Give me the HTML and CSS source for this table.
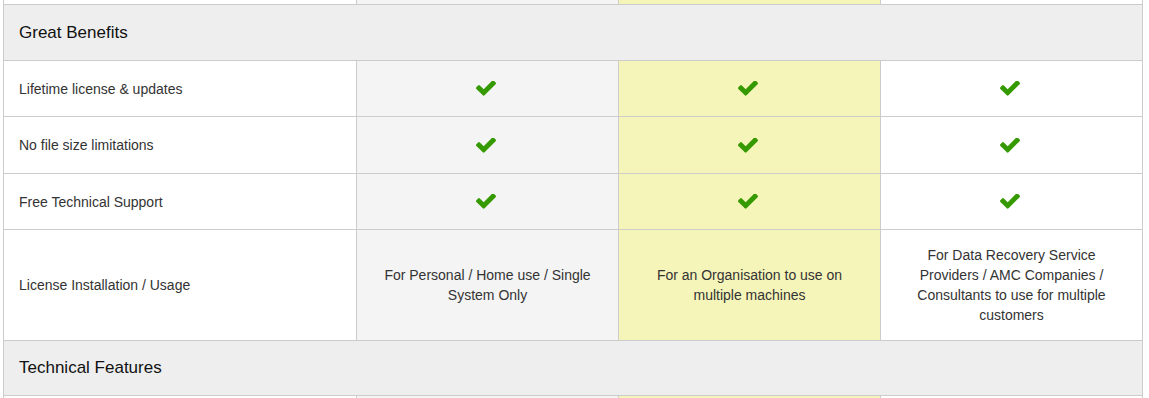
FILE: index.html
```html
<!DOCTYPE html>
<html lang="en">
<head>
<meta charset="utf-8">
<title>Compare Editions</title>
<link rel="stylesheet" href="styles.css">
</head>
<body>
<div class="compare">
  <div class="row row-edge row-top">
    <div class="cell"></div>
    <div class="cell col-personal"></div>
    <div class="cell col-business"></div>
    <div class="cell"></div>
  </div>

  <div class="row row-section">
    <div class="cell section-title">Great Benefits</div>
  </div>

  <div class="row row-feature">
    <div class="cell label">Lifetime license &amp; updates</div>
    <div class="cell col-personal value"><svg class="check" viewBox="121 410 1550 1112"><path d="M1671 566q0 40-28 68l-724 724-136 136q-28 28-68 28t-68-28l-136-136-362-362q-28-28-28-68t28-68l136-136q28-28 68-28t68 28l294 295 656-657q28-28 68-28t68 28l136 136q28 28 28 68z"/></svg></div>
    <div class="cell col-business value"><svg class="check" viewBox="121 410 1550 1112"><path d="M1671 566q0 40-28 68l-724 724-136 136q-28 28-68 28t-68-28l-136-136-362-362q-28-28-28-68t28-68l136-136q28-28 68-28t68 28l294 295 656-657q28-28 68-28t68 28l136 136q28 28 28 68z"/></svg></div>
    <div class="cell value"><svg class="check" viewBox="121 410 1550 1112"><path d="M1671 566q0 40-28 68l-724 724-136 136q-28 28-68 28t-68-28l-136-136-362-362q-28-28-28-68t28-68l136-136q28-28 68-28t68 28l294 295 656-657q28-28 68-28t68 28l136 136q28 28 28 68z"/></svg></div>
  </div>

  <div class="row row-feature row-tall">
    <div class="cell label">No file size limitations</div>
    <div class="cell col-personal value"><svg class="check" viewBox="121 410 1550 1112"><path d="M1671 566q0 40-28 68l-724 724-136 136q-28 28-68 28t-68-28l-136-136-362-362q-28-28-28-68t28-68l136-136q28-28 68-28t68 28l294 295 656-657q28-28 68-28t68 28l136 136q28 28 28 68z"/></svg></div>
    <div class="cell col-business value"><svg class="check" viewBox="121 410 1550 1112"><path d="M1671 566q0 40-28 68l-724 724-136 136q-28 28-68 28t-68-28l-136-136-362-362q-28-28-28-68t28-68l136-136q28-28 68-28t68 28l294 295 656-657q28-28 68-28t68 28l136 136q28 28 28 68z"/></svg></div>
    <div class="cell value"><svg class="check" viewBox="121 410 1550 1112"><path d="M1671 566q0 40-28 68l-724 724-136 136q-28 28-68 28t-68-28l-136-136-362-362q-28-28-28-68t28-68l136-136q28-28 68-28t68 28l294 295 656-657q28-28 68-28t68 28l136 136q28 28 28 68z"/></svg></div>
  </div>

  <div class="row row-feature">
    <div class="cell label">Free Technical Support</div>
    <div class="cell col-personal value"><svg class="check" viewBox="121 410 1550 1112"><path d="M1671 566q0 40-28 68l-724 724-136 136q-28 28-68 28t-68-28l-136-136-362-362q-28-28-28-68t28-68l136-136q28-28 68-28t68 28l294 295 656-657q28-28 68-28t68 28l136 136q28 28 28 68z"/></svg></div>
    <div class="cell col-business value"><svg class="check" viewBox="121 410 1550 1112"><path d="M1671 566q0 40-28 68l-724 724-136 136q-28 28-68 28t-68-28l-136-136-362-362q-28-28-28-68t28-68l136-136q28-28 68-28t68 28l294 295 656-657q28-28 68-28t68 28l136 136q28 28 28 68z"/></svg></div>
    <div class="cell value"><svg class="check" viewBox="121 410 1550 1112"><path d="M1671 566q0 40-28 68l-724 724-136 136q-28 28-68 28t-68-28l-136-136-362-362q-28-28-28-68t28-68l136-136q28-28 68-28t68 28l294 295 656-657q28-28 68-28t68 28l136 136q28 28 28 68z"/></svg></div>
  </div>

  <div class="row row-license">
    <div class="cell label">License Installation / Usage</div>
    <div class="cell col-personal value text">For Personal / Home use / Single System Only</div>
    <div class="cell col-business value text">For an Organisation to use on multiple machines</div>
    <div class="cell value text">For Data Recovery Service Providers / AMC Companies / Consultants to use for multiple customers</div>
  </div>

  <div class="row row-section row-section-short">
    <div class="cell section-title">Technical Features</div>
  </div>

  <div class="row row-edge">
    <div class="cell"></div>
    <div class="cell col-personal"></div>
    <div class="cell col-business"></div>
    <div class="cell"></div>
  </div>
</div>
</body>
</html>
```

FILE: styles.css
```css
html, body {
  margin: 0;
  padding: 0;
  background: #ffffff;
}

body {
  font-family: "Liberation Sans", Arial, sans-serif;
  font-size: 14px;
  line-height: 20px;
  color: #333333;
  overflow: hidden;
}

.compare {
  width: 1140px;
  margin-left: 3px;
  border-left: 1px solid #cccccc;
  box-sizing: border-box;
}

.row {
  display: grid;
  grid-template-columns: 353px 262px 262px 262px;
  height: 56px;
}

.row-tall {
  height: 57px;
}

.row-top {
  height: 5px;
}

.row-edge:not(.row-top) {
  height: 10px;
}

.row-license {
  height: 111px;
}

.cell {
  box-sizing: border-box;
  border-right: 1px solid #cccccc;
  border-bottom: 1px solid #cccccc;
  background: #ffffff;
  display: flex;
  align-items: center;
  min-width: 0;
}

.col-personal {
  background: #f4f4f4;
}

.col-business {
  background: #f6f5b9;
}

.row-section .cell {
  grid-column: 1 / -1;
  background: #eeeeee;
}

.row-section-short {
  height: 55px;
}

.section-title {
  padding: 0 15px;
  font-size: 17px;
  color: #111111;
}

.label {
  padding: 0 15px;
}

.value {
  justify-content: center;
  padding: 0 15px;
}

.text {
  text-align: center;
}

.check {
  width: 20px;
  height: 15px;
  fill: #349a00;
  margin-left: -3px;
}
```
